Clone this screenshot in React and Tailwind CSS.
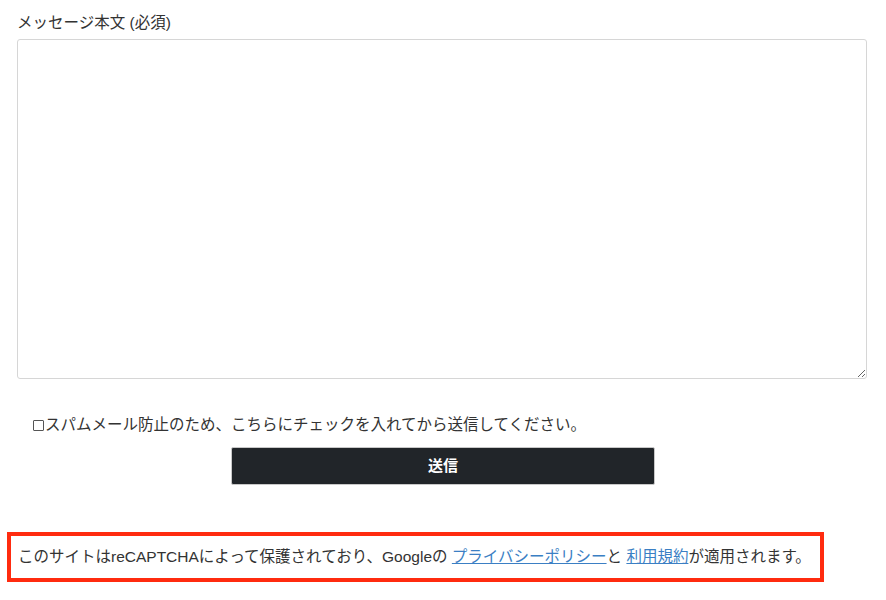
export default function App() {
  return (
    <div className="w-[886px] h-[600px] bg-white text-[#333] font-['Helvetica','Liberation_Sans','Noto_Sans_CJK_JP',sans-serif] text-[15.5px] overflow-hidden">
      <div className="pl-[17px] pr-[19px] pt-[13px]">
        <label className="block leading-[20px] mb-[6px]">メッセージ本文 (必須)</label>
        <textarea className="block w-full h-[340px] border border-[#d6d6d6] rounded-[3px] resize-y outline-none" />
      </div>

      <div className="pl-[33px] mt-[35px] flex items-center leading-[22px]">
        <input type="checkbox" className="appearance-none w-[11px] h-[11px] border border-[#555] rounded-[1px] mr-[1px] shrink-0" />
        <span>スパムメール防止のため、こちらにチェックを入れてから送信してください。</span>
      </div>

      <div className="flex justify-center mt-[11px]">
        <button className="w-[424px] h-[38px] bg-[#212529] border border-[#c8c8c8] rounded-[2px] text-white text-[15px] font-semibold">
          送信
        </button>
      </div>

      <div className="pl-[7px] mt-[47px]">
        <div className="inline-block border-[4px] border-[#ff2b0f] pl-[7px] pr-[9px] pt-[10px] pb-[10px] leading-[22px]">
          このサイトはreCAPTCHAによって保護されており、Googleの{' '}
          <a href="#" className="text-[#3b7fc4] underline">プライバシーポリシー</a>と{' '}
          <a href="#" className="text-[#3b7fc4] underline">利用規約</a>が適用されます。
        </div>
      </div>
    </div>
  );
}
